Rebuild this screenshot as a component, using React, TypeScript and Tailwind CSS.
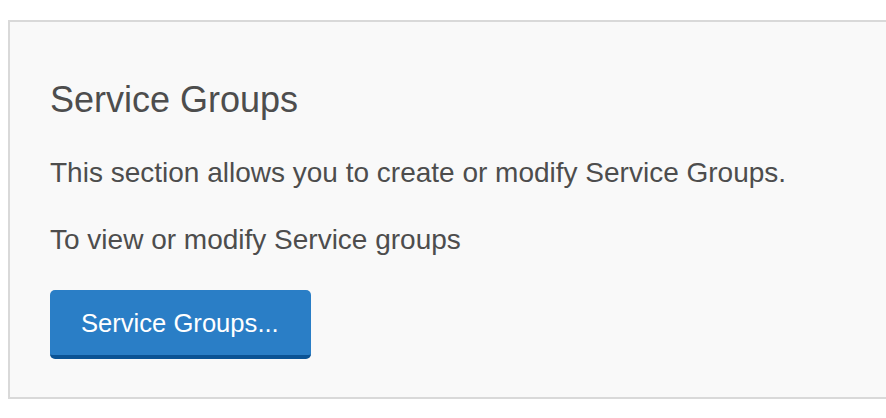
export default function App() {
  return (
    <div className="min-h-screen bg-white pt-[20px] pl-[8px] font-['Liberation_Sans',Arial,sans-serif] text-[#4d4d4d]">
      <section className="w-[900px] border-2 border-[#d9d9d9] bg-[#f9f9f9] pl-[40px] pt-[58px] pb-[38px]">
        <h2 className="text-[36px] leading-[39px] font-normal">Service Groups</h2>
        <p className="mt-[37px] text-[28px] leading-[33px]">
          This section allows you to create or modify Service Groups.
        </p>
        <p className="mt-[34px] text-[28px] leading-[33px]">To view or modify Service groups</p>
        <button
          type="button"
          className="mt-[34px] block rounded-[5px] border-b-4 border-[#0b5394] bg-[#2a7ec6] pl-[31px] pr-[32px] pt-[18px] pb-[17px] text-[25.6px] leading-[30px] text-white"
        >
          Service Groups...
        </button>
      </section>
    </div>
  );
}
